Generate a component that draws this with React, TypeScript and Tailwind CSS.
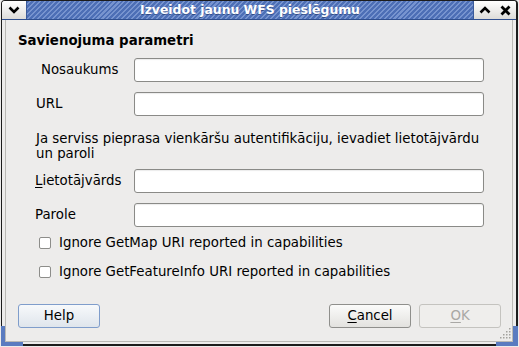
import React from "react";

function Field({ label, pl, mt, h = "h-[24px]", mnemonic }: { label: string; pl: string; mt: string; h?: string; mnemonic?: boolean }) {
  return (
    <div className={`flex items-center ${mt}`}>
      <div className={`w-[128px] ${pl}`}>
        {mnemonic ? (
          <>
            <span className="underline underline-offset-2">{label[0]}</span>
            {label.slice(1)}
          </>
        ) : (
          label
        )}
      </div>
      <div className={`w-[350px] ${h} rounded-[3px] border border-[#8a8a87] bg-white shadow-[inset_0_1px_1px_rgba(0,0,0,0.08)]`} />
    </div>
  );
}

function Check({ label, mt }: { label: string; mt: string }) {
  return (
    <div className={`flex h-[20px] items-center pl-[33px] ${mt}`}>
      <div className="h-[12px] w-[12px] rounded-[2px] border border-[#8d8d8a] bg-white" />
      <span className="ml-[8px] leading-[20px]">{label}</span>
    </div>
  );
}

export default function App() {
  return (
    <div className="relative h-[347px] w-[519px] bg-[#edeceb] px-[1px] pb-[1px] font-['DejaVu_Sans',sans-serif] text-[13.33px] leading-[16px] text-black">
      <div className="flex h-full flex-col overflow-hidden rounded-t-[4px] border-b-2 border-l border-r-2 border-t border-[#1c1c1c]">
        {/* title bar */}
        <div className="flex h-[19px] shrink-0 border-b border-[#2f4f8f]">
          <div className="flex w-[24px] items-center justify-center bg-gradient-to-b from-white to-[#dddcd9]">
            <svg width="12" height="8" viewBox="0 0 12 8">
              <polyline points="1.5,1.5 6,6 10.5,1.5" fill="none" stroke="#000" strokeWidth="2.6" />
            </svg>
          </div>
          <div className="flex flex-1 items-center justify-center border-l border-[#3a5a9a] bg-[repeating-linear-gradient(135deg,#4d6fb6_0px,#4d6fb6_2px,#7794cf_2px,#7794cf_3.5px)]">
            <span className="text-[12.4px] font-bold leading-[16px] text-white [text-shadow:0_1px_0_rgba(20,40,90,0.5)]">
              Izveidot jaunu WFS pieslēgumu
            </span>
          </div>
          <div className="flex w-[43px] border-l border-[#3a5a9a] bg-gradient-to-b from-white to-[#dddcd9]">
            <div className="flex w-[21px] items-center justify-center">
              <svg width="12" height="8" viewBox="0 0 12 8">
                <polyline points="1.5,6.5 6,2 10.5,6.5" fill="none" stroke="#000" strokeWidth="2.6" />
              </svg>
            </div>
            <div className="flex w-[21px] items-center justify-center">
              <svg width="11" height="11" viewBox="0 0 11 11">
                <path d="M1.5 1.5 L9.5 9.5 M9.5 1.5 L1.5 9.5" fill="none" stroke="#000" strokeWidth="2.8" />
              </svg>
            </div>
          </div>
        </div>

        {/* body */}
        <div className="flex flex-1 flex-col px-[3px] pb-[2px]">
          <div className="flex flex-1 flex-col border-x border-b border-[#bab9b5]">
            <div className="mt-[13px] pl-[12px] font-bold">Savienojuma parametri</div>

            <Field label="Nosaukums" pl="pl-[35px]" mt="mt-[9px]" />
            <Field label="URL" pl="pl-[30px]" mt="mt-[10px]" />

            <div className="mt-[15px] whitespace-nowrap pl-[30px] leading-[15px]">
              Ja serviss pieprasa vienkāršu autentifikāciju, ievadiet lietotājvārdu
              <br />
              un paroli
            </div>

            <Field label="Lietotājvārds" pl="pl-[29px]" mt="mt-[8px]" mnemonic />
            <Field label="Parole" pl="pl-[29px]" mt="mt-[10px]" />

            <Check label="Ignore GetMap URI reported in capabilities" mt="mt-[6px]" />
            <Check label="Ignore GetFeatureInfo URI reported in capabilities" mt="mt-[9px]" />

            <div className="mt-[22px] flex pl-[12px] pr-[11px]">
              <button className="h-[24px] w-[82px] rounded-[3px] border border-[#7f9dcb] bg-gradient-to-b from-[#f7f9fb] to-[#dfe5ec] leading-[16px]">
                Help
              </button>
              <div className="flex-1" />
              <button className="h-[24px] w-[82px] rounded-[3px] border border-[#8f8f8c] bg-gradient-to-b from-[#fbfbfa] to-[#e3e2df] leading-[16px]">
                <span className="underline underline-offset-2">C</span>ancel
              </button>
              <button className="ml-[8px] h-[24px] w-[82px] rounded-[3px] border border-[#c4c3bf] bg-[#efeeec] leading-[16px] text-[#a9a8a5]">
                <span className="underline underline-offset-2">O</span>K
              </button>
            </div>
          </div>
        </div>
      </div>

      {/* frame corner accents */}
      <div className="absolute bottom-[1px] left-[1px] h-[20px] w-[4px] bg-[#5a7bc0]" />
      <div className="absolute bottom-[1px] left-[1px] h-[4px] w-[22px] bg-[#5a7bc0]" />
      <div className="absolute bottom-[1px] right-[1px] h-[20px] w-[5px] bg-[#5a7bc0]" />
      <div className="absolute bottom-[1px] right-[1px] h-[4px] w-[22px] bg-[#5a7bc0]" />

      {/* resize grip */}
      <svg className="absolute bottom-[8px] right-[8px]" width="11" height="11" viewBox="0 0 11 11">
        {[
          [9, 1],
          [6, 4], [9, 4],
          [3, 7], [6, 7], [9, 7],
          [0, 10], [3, 10], [6, 10], [9, 10],
        ].map(([x, y], i) => (
          <rect key={i} x={x} y={y - 1} width="1.5" height="1.5" fill="#a3a29e" />
        ))}
      </svg>
    </div>
  );
}
